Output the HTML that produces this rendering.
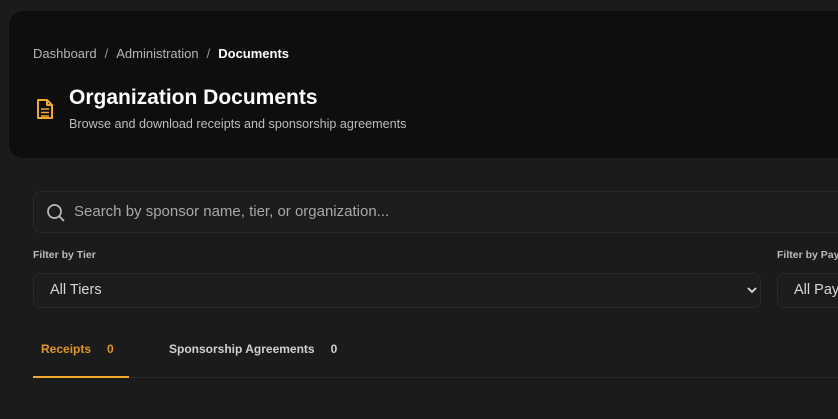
<!DOCTYPE html>
<html><head><style>
body{margin:0;width:838px;height:419px;overflow:hidden;background:#1b1b1b;font-family:"Liberation Sans",sans-serif;position:relative}
.hdr{position:absolute;left:9px;top:11px;width:900px;height:147px;background:#0e0e0e;border-radius:14px}
.bc{position:absolute;left:33px;top:46px;font-size:13px;color:#b5b5b5;white-space:nowrap}
.bc b{color:#fff}
.bc span{margin:0 8px;color:#999}
.ic{position:absolute;left:36px;top:98px}
h1{position:absolute;left:69px;top:86px;margin:0;font-size:21px;color:#fff;font-weight:bold;white-space:nowrap}
.sub{position:absolute;left:69px;top:117px;font-size:12.6px;color:#bdbdbd;white-space:nowrap}
.search{position:absolute;left:33px;top:191px;width:900px;height:40px;border:1px solid #2a2a2a;border-radius:8px;background:#1c1c1c}
.search .t{position:absolute;left:40px;top:11px;font-size:15px;color:#a8a8a8}
.lbl{position:absolute;top:249px;font-size:10.5px;font-weight:bold;color:#bbb;white-space:nowrap}
.sel{position:absolute;top:273px;height:33px;border:1px solid #2a2a2a;border-radius:8px;background:#1c1c1c}
.sel .t{position:absolute;left:16px;top:8px;font-size:14.5px;color:#d8d8d8;white-space:nowrap}
.tab{position:absolute;top:342px;font-size:12px;font-weight:bold;white-space:nowrap}
</style></head><body>
<div class="hdr"></div>
<div class="bc">Dashboard<span>/</span>Administration<span>/</span><b>Documents</b></div>
<svg class="ic" width="18" height="22" viewBox="0 0 18 22" fill="none" stroke="#f0a92a" stroke-width="2" stroke-linejoin="round"><path d="M2 2h9l5 5v13H2z"/><path d="M11 2v5h5"/><path d="M5 11h8M5 14.5h8M5 18h8" stroke-width="1.6"/></svg>
<h1>Organization Documents</h1>
<div class="sub">Browse and download receipts and sponsorship agreements</div>
<div class="search"><svg style="position:absolute;left:12px;top:11px" width="20" height="20" viewBox="0 0 20 20" fill="none" stroke="#bbb" stroke-width="1.7"><circle cx="8.5" cy="8.5" r="6.5"/><path d="M13.5 13.5l4.5 4.5"/></svg><div class="t">Search by sponsor name, tier, or organization...</div></div>
<div class="lbl" style="left:33px">Filter by Tier</div>
<div class="lbl" style="left:777px">Filter by Payment</div>
<div class="sel" style="left:33px;width:726px"><div class="t">All Tiers</div><svg style="position:absolute;right:3px;top:12px" width="10" height="8" viewBox="0 0 10 8" fill="none" stroke="#ddd" stroke-width="1.8"><path d="M1 2l4 4 4-4"/></svg></div>
<div class="sel" style="left:777px;width:200px"><div class="t">All Payments</div></div>
<div class="tab" style="left:41px;color:#e0962a">Receipts<span style="margin-left:16px">0</span></div>
<div class="tab" style="left:169px;color:#d0d0d0">Sponsorship Agreements<span style="margin-left:16px">0</span></div>
<div style="position:absolute;left:33px;top:377px;width:900px;height:1px;background:#2a2a2a"></div>
<div style="position:absolute;left:33px;top:376px;width:96px;height:2px;background:#f0a92a"></div>
</body></html>
